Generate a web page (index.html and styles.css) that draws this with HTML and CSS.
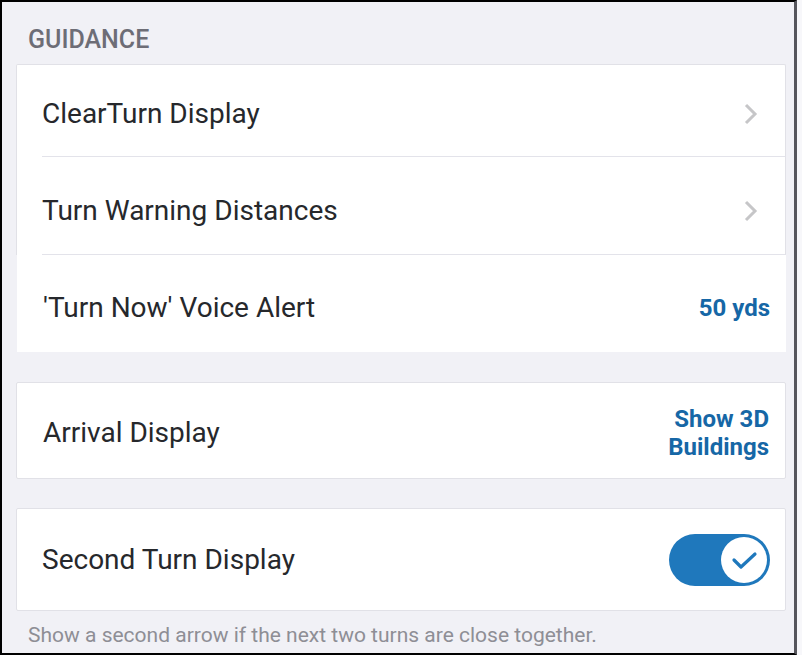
FILE: index.html
```html
<!DOCTYPE html>
<html>
<head>
<meta charset="utf-8">
<link rel="stylesheet" href="styles.css">
</head>
<body>
<div class="frame">
  <div class="section-title">GUIDANCE</div>
  <div class="group">
    <div class="card card-open">
      <div class="row row-first">
        <span class="label">ClearTurn Display</span>
        <svg class="chev" width="14" height="22" viewBox="0 0 14 22"><path d="M2 2 L11 11 L2 20" fill="none" stroke="#c6c6c8" stroke-width="3"/></svg>
      </div>
      <div class="row row-second">
        <span class="label">Turn Warning Distances</span>
        <svg class="chev" width="14" height="22" viewBox="0 0 14 22"><path d="M2 2 L11 11 L2 20" fill="none" stroke="#c6c6c8" stroke-width="3"/></svg>
      </div>
    </div>
    <div class="row row-plain">
      <span class="label">'Turn Now' Voice Alert</span>
      <span class="value">50 yds</span>
    </div>
  </div>
  <div class="card card-mid">
    <div class="row row-single">
      <span class="label">Arrival Display</span>
      <span class="value">Show 3D<br>Buildings</span>
    </div>
  </div>
  <div class="card card-last">
    <div class="row row-toggle">
      <span class="label">Second Turn Display</span>
      <span class="toggle">
        <span class="knob">
          <svg width="30" height="30" viewBox="0 0 30 30"><path d="M5 15 L12 22 L26 9" fill="none" stroke="#1f78bc" stroke-width="3.2" stroke-linecap="round" stroke-linejoin="round"/></svg>
        </span>
      </span>
    </div>
  </div>
  <div class="help">Show a second arrow if the next two turns are close together.</div>
</div>
</body>
</html>
```

FILE: styles.css
```css
html, body {
  margin: 0;
  padding: 0;
}
body {
  background: #f7f7fa;
  font-family: Roboto, "Noto Sans", sans-serif;
  width: 802px;
  height: 655px;
  overflow: hidden;
}
.frame {
  box-sizing: border-box;
  width: 797px;
  height: 655px;
  background: #f1f1f6;
  border-top: 2px solid #000;
  border-left: 2px solid #000;
  border-bottom: 2px solid #000;
  border-right: 3px solid #55555c;
  padding: 0 8px 0 14px;
  display: flex;
  flex-direction: column;
}
.section-title {
  height: 62px;
  box-sizing: border-box;
  padding: 24px 0 0 12px;
  font-size: 25px;
  line-height: 28px;
  font-weight: 500;
  color: #6d6d76;
}
.card {
  background: #fff;
  border: 1px solid #e1e1e7;
  border-radius: 2px;
}
.card-open {
  border-bottom: none;
  border-radius: 2px 2px 0 0;
}
.row {
  display: flex;
  align-items: center;
  justify-content: space-between;
  padding: 0 16px 0 26px;
  box-sizing: border-box;
}
.row-first {
  height: 92px;
  padding-top: 6px;
  border-bottom: 1px solid #e3e3ea;
  margin-left: 25px;
  padding-left: 0;
  padding-right: 27px;
}
.row-second {
  height: 98px;
  padding-top: 10px;
  border-bottom: 1px solid #e3e3ea;
  margin-left: 25px;
  padding-left: 0;
  padding-right: 27px;
}
.row-plain {
  background: #fff;
  height: 97px;
  padding-top: 8px;
  margin-left: 1px;
}
.card-mid {
  margin-top: 30px;
}
.row-single {
  height: 95px;
  padding-top: 4px;
  padding-left: 26px;
}
.card-last {
  margin-top: 29px;
}
.row-toggle {
  height: 101px;
  padding-left: 25px;
  padding-right: 15px;
}
.label {
  font-size: 28px;
  color: #26282c;
  line-height: 32px;
}
.value {
  font-size: 24px;
  font-weight: 700;
  color: #1667a6;
  text-align: right;
  line-height: 28px;
}
.chev {
  display: block;
}
.toggle {
  width: 101px;
  height: 52px;
  border-radius: 26px;
  background: #1f78bc;
  display: flex;
  align-items: center;
  justify-content: flex-end;
  padding-right: 3px;
  box-sizing: border-box;
}
.knob {
  width: 46px;
  height: 46px;
  border-radius: 50%;
  background: #fff;
  display: flex;
  align-items: center;
  justify-content: center;
}
.knob svg {
  display: block;
}
.help {
  margin-top: 12px;
  padding-left: 12px;
  font-size: 21px;
  font-weight: 400;
  color: #8e8e95;
  line-height: 24px;
}
```
